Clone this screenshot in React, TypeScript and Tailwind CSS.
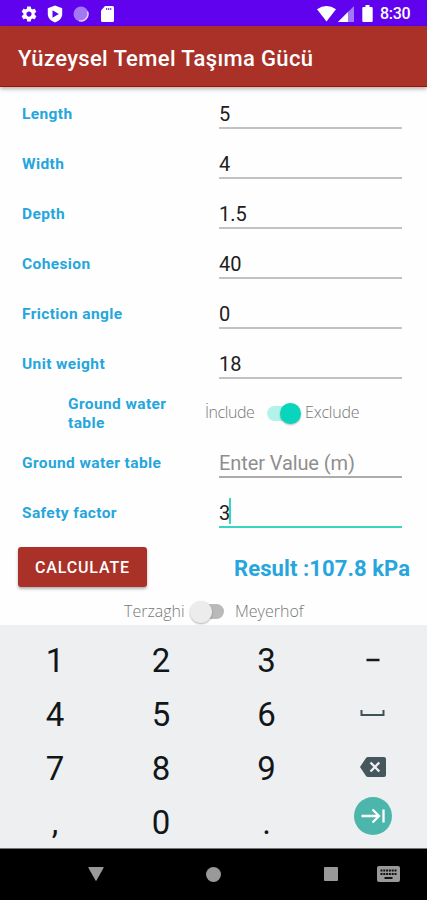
import React from "react";

const fields = [
  { label: "Length", value: "5" },
  { label: "Width", value: "4" },
  { label: "Depth", value: "1.5" },
  { label: "Cohesion", value: "40" },
  { label: "Friction angle", value: "0" },
  { label: "Unit weight", value: "18" },
];

function StatusBar() {
  return (
    <header className="flex h-[26px] items-center bg-[#6002ee] pt-px pl-5 pr-[16px] text-white">
      <svg className="h-[18px] w-[18px]" viewBox="0 0 24 24" fill="currentColor">
        <path d="M19.43 12.98c.04-.32.07-.64.07-.98s-.03-.66-.07-.98l2.11-1.65c.19-.15.24-.42.12-.64l-2-3.46c-.12-.22-.39-.3-.61-.22l-2.49 1c-.52-.4-1.08-.73-1.69-.98l-.38-2.65A.488.488 0 0 0 14 2h-4c-.25 0-.46.18-.49.42l-.38 2.65c-.61.25-1.17.59-1.69.98l-2.49-1c-.23-.09-.49 0-.61.22l-2 3.46c-.13.22-.07.49.12.64l2.11 1.65c-.04.32-.07.65-.07.98s.03.66.07.98l-2.11 1.65c-.19.15-.24.42-.12.64l2 3.46c.12.22.39.3.61.22l2.49-1c.52.4 1.08.73 1.69.98l.38 2.65c.03.24.24.42.49.42h4c.25 0 .46-.18.49-.42l.38-2.65c.61-.25 1.17-.59 1.69-.98l2.49 1c.23.09.49 0 .61-.22l2-3.46c.12-.22.07-.49-.12-.64l-2.11-1.65zM12 15.5c-1.93 0-3.5-1.57-3.5-3.5s1.57-3.5 3.5-3.5 3.5 1.57 3.5 3.5-1.57 3.5-3.5 3.5z" />
      </svg>
      <svg className="ml-[9px] h-[18px] w-4" viewBox="0 0 16 18">
        <path d="M8 .5 15.2 3.2V9c0 4-3 7-7.2 8.5C3.800 16 .8 13 .8 9V3.200z" fill="currentColor" />
        <path d="M5.500 5.300 11.800 9 5.500 12.700z" fill="#6002ee" />
      </svg>
      <svg className="ml-[10px] h-4 w-4" viewBox="0 0 16 16">
        <circle cx="8" cy="8" r="7.500" fill="#a477f5" />
        <path d="M14.500 5.500A7 7 0 0 1 6 14.700" fill="none" stroke="#e3d5ff" strokeWidth="1.400" />
      </svg>
      <svg className="ml-[11px] h-4 w-[15px]" viewBox="0 0 15 16">
        <path d="M5 0h7.500Q14 0 14 1.500v13q0 1.500-1.500 1.500h-10Q1 16 1 14.500V4.500z" fill="currentColor" />
        <path d="M6 3h6" stroke="#8050ee" strokeWidth="1.800" strokeDasharray="1.200 .7" />
      </svg>
      <svg className="ml-auto h-4 w-[19px]" viewBox="0 0 19 16">
        <path d="M0 3.200Q9.500-3.200 19 3.200L9.500 15.500z" fill="currentColor" />
      </svg>
      <svg className="ml-[2px] h-4 w-4" viewBox="0 0 16 16">
        <path d="M0 16 16 0v16z" fill="#a477f5" />
        <path d="M0 16 10 6v10z" fill="currentColor" />
      </svg>
      <svg className="ml-[8px] h-[17px] w-[11px]" viewBox="0 0 11 17">
        <path d="M3.500 0h4v2H9.500Q10.700 2 10.700 3.200v12.600Q10.700 17 9.500 17h-8Q.3 17 .3 15.800V3.200Q.3 2 1.500 2h2z" fill="currentColor" />
      </svg>
      <span className="mt-px ml-[7px] w-[31px] whitespace-nowrap text-[16px] leading-[26px] font-medium tracking-[-0.3px]">8:30</span>
    </header>
  );
}

function Field({ label, value, placeholder, active }: { label: string; value?: string; placeholder?: string; active?: boolean }) {
  return (
    <div className="flex h-[50px] pl-[22px] pr-[25px]">
      <div className="w-[197px] pt-[15px] text-[15.5px] leading-5 font-bold tracking-[0.39px] text-[#26a6dc]">{label}</div>
      <div
        className={
          active
            ? "flex h-10 flex-1 border-b-2 border-[#38d5c2] pt-[13px]"
            : placeholder
              ? "flex h-10 flex-1 border-b-2 border-[#acacac] pt-[13px]"
              : "flex h-10 flex-1 border-b-2 border-[#c2c2c2] pt-[13px]"
        }
      >
        {placeholder ? (
          <span className="text-[20px] leading-[25px] tracking-[-0.1px] text-[#8e8e8e]">{placeholder}</span>
        ) : (
          <span className="text-[20px] leading-[25px] text-[#202020]">{value}</span>
        )}
        {active && <span className="-mt-[3px] -ml-px h-[26px] w-[2px] bg-[#38d5c2]" />}
      </div>
    </div>
  );
}

function Key({ children }: { children: React.ReactNode }) {
  return <div className="flex items-center justify-center">{children}</div>;
}

export default function App() {
  return (
    <main className="flex h-[900px] w-[427px] flex-col overflow-hidden bg-[#fefefe] font-[Roboto,sans-serif]">
      <StatusBar />
      <div className="z-10 flex h-[61px] items-center border-b border-[#a01208] bg-[#a93127] pt-[4px] pl-[18px] text-[22px] font-medium tracking-[0.35px] text-white shadow-[0_2px_4px_rgba(0,0,0,0.3)]">
        <span className="whitespace-nowrap">Yüzeysel Temel Taşıma Gücü</span>
      </div>
      <section className="h-[538px] pt-[2px]">
        {fields.map((f) => (
          <Field key={f.label} {...f} />
        ))}
        <div className="flex h-[49px] items-start">
          <div className="ml-[68px] w-[137px] pt-[6px] text-[15.5px] leading-[19px] font-bold tracking-[0.39px] text-[#26a6dc]">
            Ground water
            <br />
            table
          </div>
          <div className="w-[62px] pt-[11px] font-['Open_Sans',sans-serif] text-[16px] leading-6 font-light tracking-[-0.45px] text-[#777]">İnclude</div>
          <div className="mt-[13px] flex h-[23px] w-[36px] items-center">
            <div className="h-[15px] w-[30px] rounded-full bg-[#b1f3ea]" />
            <div className="-ml-[17px] h-[21px] w-[21px] shrink-0 rounded-full bg-[#09d5bd] shadow-[0_1px_2px_rgba(0,0,0,0.3)]" />
          </div>
          <div className="ml-[2px] pt-[11px] font-['Open_Sans',sans-serif] text-[16px] leading-6 font-light tracking-[-0.2px] text-[#777]">Exclude</div>
        </div>
        <Field label="Ground water table" placeholder="Enter Value (m)" />
        <Field label="Safety factor" value="3" active />
        <div className="flex h-[60px] items-start pt-[9px] pl-[18px]">
          <button className="h-10 w-[129px] rounded-[3px] bg-[#a93127] pt-[2px] text-[16px] font-medium tracking-[0.85px] text-white shadow-[0_2px_3px_rgba(0,0,0,0.3)]">CALCULATE</button>
          <div className="ml-[87px] pt-[9px] text-[22px] leading-[25px] font-bold tracking-[0.1px] whitespace-nowrap text-[#26a6dc]">Result :107.8 kPa</div>
        </div>
        <div className="flex h-[27px] items-start pl-[124px] font-['Open_Sans',sans-serif] text-[16px] leading-6 font-light text-[#777]">
          <span className="w-[66px] pt-px">Terzaghi</span>
          <div className="mt-[2px] flex h-[23px] w-[34px] items-center">
            <div className="z-10 h-[22px] w-[22px] shrink-0 rounded-full bg-[#ececec] shadow-[0_1px_2px_rgba(0,0,0,0.3)]" />
            <div className="-ml-[18px] h-[15px] w-[30px] rounded-full bg-[#b9b9b9]" />
          </div>
          <span className="ml-[11px] pt-px">Meyerhof</span>
        </div>
      </section>
      <section className="h-[223px] bg-[#edeff1] text-[33px] leading-none text-[#111719]">
        <div className="grid grid-cols-[110px_102px_109px_103px] grid-rows-[54px_54px_54px_54px] pt-[8px]">
          <Key>1</Key>
          <Key>2</Key>
          <Key>3</Key>
          <Key><svg className="h-4 w-4" viewBox="0 0 16 16"><path d="M1.500 8h13" stroke="#15191b" strokeWidth="2.500" /></svg></Key>
          <Key>4</Key>
          <Key>5</Key>
          <Key>6</Key>
          <Key><svg className="-mt-[2px] h-[8px] w-[25px]" viewBox="0 0 25 8"><path d="M1.500 1v5h22V1" fill="none" stroke="#405258" strokeWidth="2" /></svg></Key>
          <Key>7</Key>
          <Key>8</Key>
          <Key>9</Key>
          <Key>
            <svg className="-mt-[2px] h-5 w-[26px]" viewBox="0 0 26 20">
              <path d="M8 0h16q2 0 2 2v16q0 2-2 2H8q-1.300 0-2-1L0 10l6-9q.7-1 2-1z" fill="#46565d" />
              <path d="m10.500 5.500 8.800 9m0-9-8.800 9" stroke="#eceff1" strokeWidth="2.400" />
            </svg>
          </Key>
          <Key>,</Key>
          <Key>0</Key>
          <Key>.</Key>
          <Key>
            <svg className="-mt-[13px] h-[38px] w-[38px]" viewBox="0 0 38 38">
              <circle cx="19" cy="19" r="19" fill="#4db6ac" />
              <path d="M7.500 19H25m-6.500-6.500L25 19l-6.500 6.500M29.500 12.500v13" fill="none" stroke="white" strokeWidth="2.300" />
            </svg>
          </Key>
        </div>
      </section>
      <nav className="flex h-[52px] items-center border-t border-[#777] bg-black pb-px">
        <svg className="ml-[88px] h-4 w-4" viewBox="0 0 16 16"><path d="M1 1h14q1 0 .5 1L8.600 14.300q-.6 1-1.200 0L.5 2Q0 1 1 1z" fill="#999" /></svg>
        <div className="ml-[102px] h-[15px] w-[15px] rounded-full bg-[#999]" />
        <div className="ml-[103px] h-[14px] w-[14px] rounded-[1px] bg-[#999]" />
        <svg className="ml-[39px] h-4 w-[23px]" viewBox="0 0 23 16">
          <rect width="23" height="16" rx="2" fill="#999" />
          <path d="M3.500 4.500h16M3.500 8h16" stroke="#111" strokeWidth="2" strokeDasharray="2 .8" />
          <path d="M7.500 12h8" stroke="#111" strokeWidth="2" />
        </svg>
      </nav>
    </main>
  );
}
